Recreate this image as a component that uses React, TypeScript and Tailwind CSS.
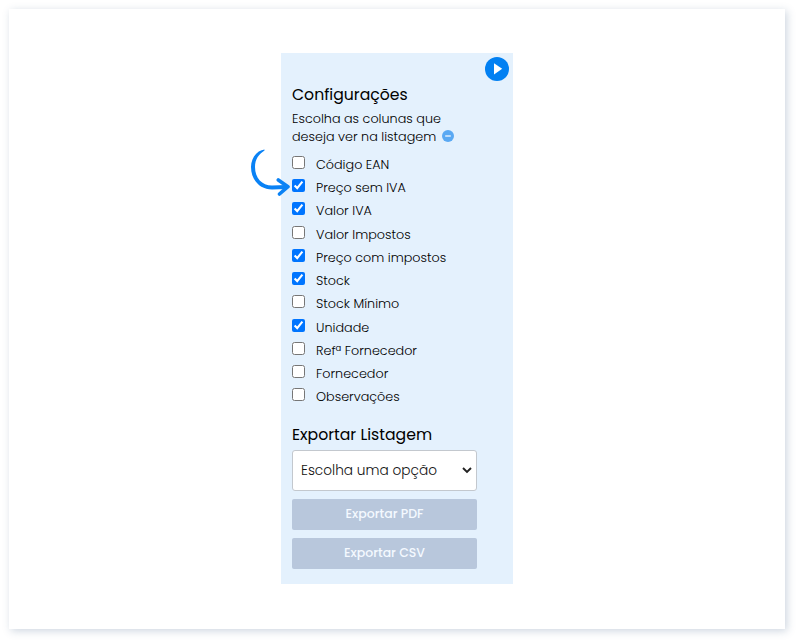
import { useState } from "react";

const initialColumns = [
  { name: "Código EAN", checked: false },
  { name: "Preço sem IVA", checked: true },
  { name: "Valor IVA", checked: true },
  { name: "Valor Impostos", checked: false },
  { name: "Preço com impostos", checked: true },
  { name: "Stock", checked: true },
  { name: "Stock Mínimo", checked: false },
  { name: "Unidade", checked: true },
  { name: "Refª Fornecedor", checked: false },
  { name: "Fornecedor", checked: false },
  { name: "Observações", checked: false },
];

export default function App() {
  const [columns, setColumns] = useState(initialColumns);

  const toggle = (name: string) => {
    setColumns(columns.map((c) => (c.name === name ? { ...c, checked: !c.checked } : c)));
  };

  return (
    <div className="h-[644px] w-[800px] overflow-hidden bg-white pt-[9px] pl-[9px] font-['Poppins','Inter',sans-serif]">
      <div className="flex h-[620px] w-[776px] justify-center bg-white pt-11 shadow-[2px_2px_8px_0px_rgba(60,90,130,0.25)]">
        <aside className="relative h-[531px] w-[232px] bg-[#e4f1fd] px-[11px] text-black">
          <div className="-mr-[7px] flex h-8 justify-end pt-1">
            <button className="h-6 w-6">
              <svg viewBox="0 0 24 24" className="h-6 w-6">
                <circle cx="12" cy="12" r="12" fill="#0280f2" />
                <path d="M9 6.2v11.2l8.2-5.6z" fill="#fff" />
              </svg>
            </button>
          </div>

          <h2 className="text-[15.7px] leading-5">Configurações</h2>
          <p className="mt-[5px] text-[12.75px] leading-[17.5px] font-light">
            <span className="block">Escolha as colunas que</span>
            <span className="flex items-center">
              <span>deseja ver na listagem</span>
              <svg viewBox="0 0 12 12" className="ml-[6px] h-3 w-3">
                <circle cx="6" cy="6" r="6" fill="#5aa9f3" />
                <path d="M3.2 6h5.6" stroke="#fff" strokeWidth="1.2" />
              </svg>
            </span>
          </p>

          <ul className="mt-[7.8px]">
            {columns.map((col) => (
              <li key={col.name} className="h-[23.27px]">
                <label className="flex">
                  <input
                    type="checkbox"
                    checked={col.checked}
                    onChange={() => toggle(col.name)}
                    className="mt-[3px] h-[13px] w-[13px]"
                  />
                  <span className="ml-[11px] text-[12.75px] leading-[23px] font-light">{col.name}</span>
                </label>
              </li>
            ))}
          </ul>

          <h2 className="mt-4 text-[15.7px] leading-5">Exportar Listagem</h2>
          <div className="mt-[5px] flex h-[41px] w-[185px] items-center justify-between rounded-[3px] border border-[#c3c8ce] bg-white pr-1 pl-2 text-[13.7px] font-light text-[#111]">
            <span className="pt-0.5">Escolha uma opção</span>
            <svg viewBox="0 0 10 8" className="h-2 w-[10px]">
              <path d="M1 2l4 4 4-4" fill="none" stroke="#222" strokeWidth="1.9" />
            </svg>
          </div>
          <button className="mt-2 block h-[31px] w-[185px] rounded-[2px] bg-[#b8c7dc] pt-px text-[12.5px] font-medium text-[#f4f9ff]">
            Exportar PDF
          </button>
          <button className="mt-2 block h-[31px] w-[185px] rounded-[2px] bg-[#b8c7dc] text-[12.5px] font-medium text-[#f4f9ff]">
            Exportar CSV
          </button>

          {/* seta de destaque */}
          <svg viewBox="0 0 40 48" className="absolute top-[95px] -left-[31px] h-12 w-10">
            <path d="M14.5 1.5C8 2 1 9 1 19C1 32 10 41.5 22 41.5L36 41V37L22 37.5C12 37.5 5 30 5 19C5 11 9 6 14.5 2.5Z" fill="#0a82f5" />
            <path d="M28.3 32L38 38.7L29.5 46" fill="none" stroke="#0a82f5" strokeWidth="3.6" strokeLinecap="round" strokeLinejoin="round" />
          </svg>
        </aside>
      </div>
    </div>
  );
}
